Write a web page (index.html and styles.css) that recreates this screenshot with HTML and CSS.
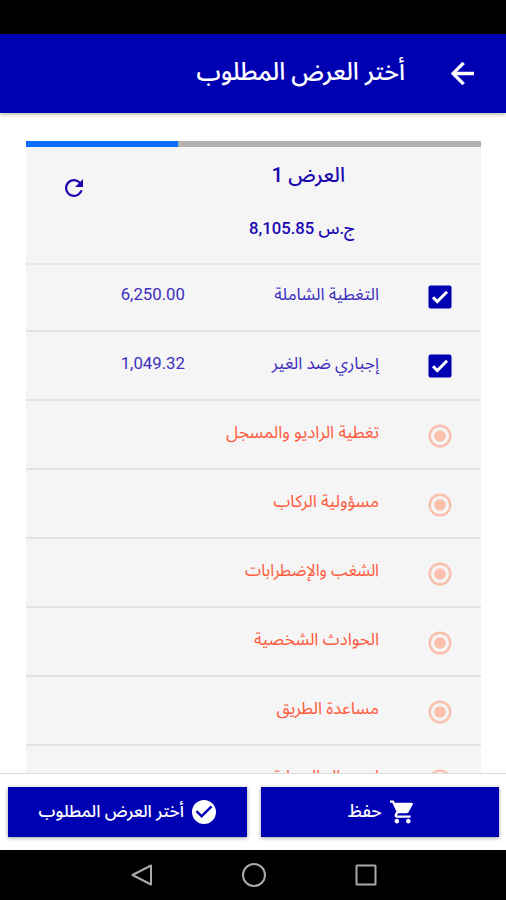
FILE: index.html
```html
<!DOCTYPE html>
<html lang="ar" dir="rtl">
<head>
<meta charset="utf-8">
<title>أختر العرض المطلوب</title>
<link rel="stylesheet" href="styles.css">
</head>
<body>
<div class="status"></div>
<header class="bar">
  <svg class="back" viewBox="4 4 16 16"><path fill="#fff" stroke="#fff" stroke-width=".4" d="M20 11H7.830l5.590-5.590L12 4l-8 8 8 8 1.410-1.410L7.830 13H20z"/></svg>
  <h1>أختر العرض المطلوب</h1>
</header>
<main class="content">
  <section class="card">
    <div class="progress"><div class="progress-fill"></div></div>
    <div class="offer">
      <svg class="reload" viewBox="4 4 16 16"><path fill="#1c08b0" d="M17.650 6.350A7.960 7.960 0 0 0 12 4a8 8 0 1 0 7.730 10h-2.080A6 6 0 1 1 12 6c1.660 0 3.140.69 4.220 1.780L13 11h7V4z"/></svg>
      <h2>العرض 1</h2>
      <p class="total"><span>ج.س</span> <b>8,105.85</b></p>
    </div>
    <div class="row first"><svg class="mark" viewBox="0 0 24 24"><rect x=".5" y=".5" width="23" height="23" rx="2" fill="#0000b3"/><path d="M5 12.200l4.300 4.400L19 6.800" fill="none" stroke="#fff" stroke-width="3"/></svg><span class="name">التغطية الشاملة</span><span class="amount">6,250.00</span></div>
    <div class="row"><svg class="mark" viewBox="0 0 24 24"><rect x=".5" y=".5" width="23" height="23" rx="2" fill="#0000b3"/><path d="M5 12.200l4.300 4.400L19 6.800" fill="none" stroke="#fff" stroke-width="3"/></svg><span class="name">إجباري ضد الغير</span><span class="amount">1,049.32</span></div>
    <div class="row off"><svg class="mark" viewBox="0 0 24 24"><circle cx="12" cy="12" r="10.300" fill="none" stroke="#fbbfae" stroke-width="2.400"/><circle cx="12" cy="12" r="5.800" fill="#fbbfae"/></svg><span class="name">تغطية الراديو والمسجل</span></div>
    <div class="row off"><svg class="mark" viewBox="0 0 24 24"><circle cx="12" cy="12" r="10.300" fill="none" stroke="#fbbfae" stroke-width="2.400"/><circle cx="12" cy="12" r="5.800" fill="#fbbfae"/></svg><span class="name">مسؤولية الركاب</span></div>
    <div class="row off"><svg class="mark" viewBox="0 0 24 24"><circle cx="12" cy="12" r="10.300" fill="none" stroke="#fbbfae" stroke-width="2.400"/><circle cx="12" cy="12" r="5.800" fill="#fbbfae"/></svg><span class="name condensed">الشغب والإضطرابات</span></div>
    <div class="row off"><svg class="mark" viewBox="0 0 24 24"><circle cx="12" cy="12" r="10.300" fill="none" stroke="#fbbfae" stroke-width="2.400"/><circle cx="12" cy="12" r="5.800" fill="#fbbfae"/></svg><span class="name">الحوادث الشخصية</span></div>
    <div class="row off"><svg class="mark" viewBox="0 0 24 24"><circle cx="12" cy="12" r="10.300" fill="none" stroke="#fbbfae" stroke-width="2.400"/><circle cx="12" cy="12" r="5.800" fill="#fbbfae"/></svg><span class="name">مساعدة الطريق</span></div>
    <div class="row off last"><svg class="mark" viewBox="0 0 24 24"><circle cx="12" cy="12" r="10.300" fill="none" stroke="#fbbfae" stroke-width="2.400"/><circle cx="12" cy="12" r="5.800" fill="#fbbfae"/></svg><span class="name">استبدال السيارة</span></div>
  </section>
</main>
<footer class="actions">
  <button class="btn"><svg class="cart" viewBox="1 2 21 20"><path fill="#fff" d="M7 18c-1.100 0-1.990.9-1.990 2S5.900 22 7 22s2-.9 2-2-.9-2-2-2zM1 2v2h2l3.600 7.590-1.350 2.450c-.16.28-.25.61-.25.96 0 1.100.9 2 2 2h12v-2H7.420a.25.25 0 0 1-.25-.25l.03-.12.9-1.630h7.450c.75 0 1.410-.41 1.750-1.030l3.580-6.490A1 1 0 0 0 20 4H5.210l-.94-2H1zm16 16c-1.100 0-1.990.9-1.990 2s.89 2 1.990 2 2-.9 2-2-.9-2-2-2z"/></svg><span class="label save">حفظ</span></button>
  <button class="btn"><svg class="check" viewBox="2 2 20 20"><path fill="#fff" d="M12 2a10 10 0 1 0 0 20 10 10 0 0 0 0-20zm-2 15l-5-5 1.410-1.410L10 14.170l7.590-7.590L19 8z"/></svg><span class="label">أختر العرض المطلوب</span></button>
</footer>
<nav class="nav" dir="ltr">
  <svg viewBox="0 0 24 24"><path d="M21 2.500v19L2.500 12z" fill="none" stroke="#aaa" stroke-width="2" stroke-linejoin="round"/></svg>
  <svg viewBox="0 0 24 24"><circle cx="12" cy="12" r="11" fill="none" stroke="#aaa" stroke-width="2"/></svg>
  <svg viewBox="0 0 24 24"><rect x="2.500" y="2.500" width="19" height="19" rx=".5" fill="none" stroke="#aaa" stroke-width="2"/></svg>
</nav>
</body>
</html>
```
FILE: styles.css
```css
* { box-sizing: border-box; }
body {
  margin: 0;
  height: 900px;
  overflow: hidden;
  display: flex;
  flex-direction: column;
  background: #fff;
  font-family: Roboto, "Noto Sans Arabic", "DejaVu Sans", sans-serif;
  color: #1c08b0;
}
h1, h2, p { margin: 0; font-weight: 500; white-space: nowrap; }
svg { display: block; flex: none; }
.status { height: 34px; background: #000; flex: none; }
.bar {
  height: 79px;
  flex: none;
  display: flex;
  align-items: center;
  padding-right: 32px;
  background: #0000b3;
  color: #fff;
  box-shadow: 0 1px 4px rgba(0, 0, 0, .35);
}
.back { width: 23px; height: 23px; }
.bar h1 { margin: 0 46px 4px 0; font-size: 24.400px; line-height: 40px; }
.content { height: 660px; flex: none; overflow: hidden; padding: 28px 25px 0 26px; }
.card { background: #f5f5f5; }
.progress { height: 6px; background: #b1b1b1; direction: ltr; }
.progress-fill { width: 152px; height: 6px; background: #086cff; }
.offer {
  height: 118px;
  display: grid;
  grid-template-columns: 126px 130px 1fr;
  grid-template-rows: 54px 52px;
  border-bottom: 2px solid #e6e6e6;
}
.reload { width: 18px; height: 18px; grid-column: 3; grid-row: 1; justify-self: end; margin: 32px 0 0 39px; }
.offer h2 { grid-column: 2; grid-row: 1; font-size: 20.5px; line-height: 56px; padding-right: 10px; }
.total { grid-column: 2; grid-row: 2; font-size: 16.7px; line-height: 56px; }
.total b { font-weight: 500; }
.row {
  height: 68.95px;
  display: flex;
  align-items: flex-start;
  border-bottom: 2px solid #e2e2e2;
  padding-right: 29px;
}
.first { height: 67.3px; }
.mark { width: 24px; height: 24px; margin-top: 22px; }
.name { width: 194px; margin: 16px 49px 0 0; font-size: 17px; line-height: 30px; white-space: nowrap; }
.amount { font-size: 16.8px; line-height: 30px; margin-top: 16px; }
.first .mark { margin-top: 20px; }
.first .name, .first .amount { margin-top: 14px; }
.row:not(.off) span { color: #3d2fbd; }
.off { color: #ff5a3c; }
.off .mark { margin-top: 23px; }
.last .name { margin-top: 15px; }
.condensed { transform: scaleX(.955); transform-origin: right; }
.actions {
  height: 77px;
  flex: none;
  display: flex;
  gap: 14px;
  padding: 13px 7px 13px 8px;
  border-top: 1px solid #dcdcdc;
}
.btn {
  flex: 1;
  height: 50px;
  display: flex;
  align-items: center;
  justify-content: center;
  gap: 8px;
  border: 0;
  padding: 0 0 1px;
  background: #0000b3;
  color: #fff;
  font: 500 17px Roboto, "Noto Sans Arabic", "DejaVu Sans", sans-serif;
  white-space: nowrap;
  box-shadow: 0 1px 4px rgba(0, 0, 0, .4);
}
.save { font-size: 17.5px; }
.cart, .check { width: 24px; height: 24px; }
.cart { margin-right: -2px; }
.nav {
  height: 50px;
  flex: none;
  display: flex;
  justify-content: center;
  gap: 88px;
  padding: 13px 0 0 1px;
  background: #000;
}
.nav svg { width: 24px; height: 24px; }
```
